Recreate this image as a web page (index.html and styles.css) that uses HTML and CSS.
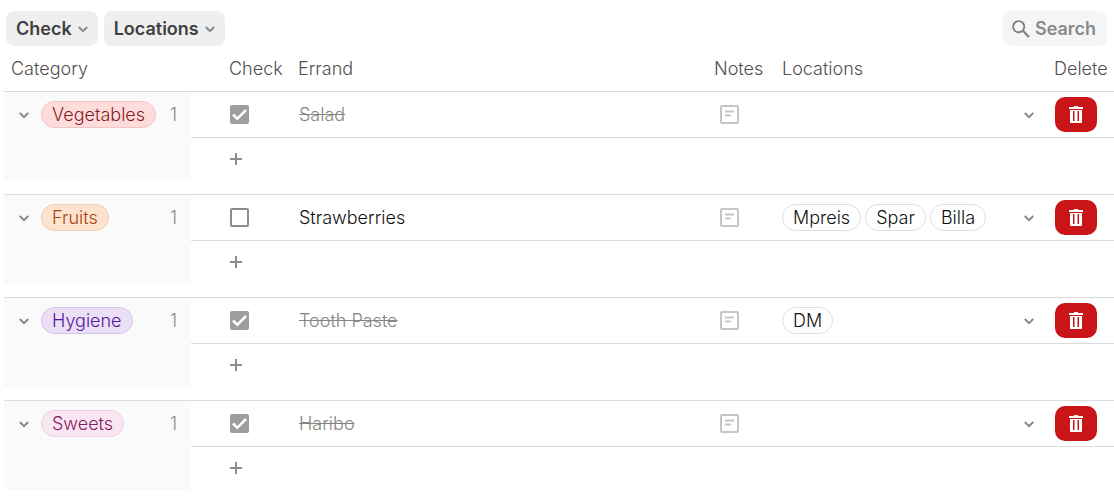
FILE: index.html
```html
<!DOCTYPE html>
<html lang="en">
<head>
  <meta charset="UTF-8" />
  <meta name="viewport" content="width=device-width, initial-scale=1.0"/>
  <title>Errands</title>
  <link rel="stylesheet" href="styles.css">
</head>
<body>

  <!-- Icons -->
  <svg class="sprite" aria-hidden="true">
    <symbol id="chevron" viewBox="0 0 10 10">
      <path d="M.8 3l4.2 4.2L9.2 3" fill="none" stroke="currentColor" stroke-width="2"/>
    </symbol>
    <symbol id="search" viewBox="0 0 18 18">
      <circle cx="6.7" cy="6.7" r="5.6" fill="none" stroke="currentColor" stroke-width="1.9"/>
      <path d="M10.8 10.8l6.2 6.2" fill="none" stroke="currentColor" stroke-width="2.3"/>
    </symbol>
    <symbol id="note" viewBox="0 0 19 19">
      <rect x="1" y="1" width="17" height="17" rx="1" fill="none" stroke="currentColor" stroke-width="2"/>
      <path d="M5 6.5h9M5 10.5h6" fill="none" stroke="currentColor" stroke-width="2"/>
    </symbol>
    <symbol id="plus" viewBox="0 0 12 12">
      <path d="M6 0v12M0 6h12" fill="none" stroke="currentColor" stroke-width="2"/>
    </symbol>
    <symbol id="trash" viewBox="0 0 14 17">
      <path d="M0 1h4.5l.8-1h3.4l.8 1H14v2H0z" fill="currentColor"/>
      <path fill-rule="evenodd" d="M1 4h12v12a1 1 0 0 1-1 1H2a1 1 0 0 1-1-1zM4 5v10h1.5V5zM8.5 5v10H10V5z" fill="currentColor"/>
    </symbol>
  </svg>

  <header class="toolbar">
    <button class="filter" type="button">Check <svg class="chevron"><use href="#chevron"/></svg></button>
    <button class="filter" type="button">Locations <svg class="chevron"><use href="#chevron"/></svg></button>
    <label class="search">
      <svg class="search-icon"><use href="#search"/></svg>
      <input type="text" placeholder="Search" aria-label="Search">
    </label>
  </header>

  <table class="errands">
    <colgroup>
      <col class="col-category">
      <col class="col-check">
      <col>
      <col class="col-notes">
      <col class="col-locations">
      <col class="col-delete">
    </colgroup>
    <thead>
      <tr>
        <th>Category</th>
        <th class="check">Check</th>
        <th>Errand</th>
        <th>Notes</th>
        <th>Locations</th>
        <th>Delete</th>
      </tr>
    </thead>

    <tbody>
      <tr class="item">
        <th class="category" rowspan="2" scope="rowgroup">
          <div class="group">
            <button class="icon-btn" type="button" aria-label="Collapse Vegetables"><svg class="chevron"><use href="#chevron"/></svg></button>
            <span class="tag vegetables">Vegetables</span>
            <span class="count">1</span>
          </div>
        </th>
        <td class="check"><input type="checkbox" aria-label="Salad" checked></td>
        <td class="done">Salad</td>
        <td class="notes"><button class="icon-btn" type="button" aria-label="Notes"><svg class="note"><use href="#note"/></svg></button></td>
        <td class="places">
          <div class="locations">
            <button class="icon-btn open" type="button" aria-label="Choose locations"><svg class="chevron"><use href="#chevron"/></svg></button>
          </div>
        </td>
        <td><button class="delete" type="button" aria-label="Delete Salad"><svg class="trash"><use href="#trash"/></svg></button></td>
      </tr>
      <tr class="add">
        <td class="check" colspan="5"><button class="icon-btn" type="button" aria-label="Add errand"><svg class="plus"><use href="#plus"/></svg></button></td>
      </tr>
    </tbody>

    <tbody>
      <tr class="item">
        <th class="category" rowspan="2" scope="rowgroup">
          <div class="group">
            <button class="icon-btn" type="button" aria-label="Collapse Fruits"><svg class="chevron"><use href="#chevron"/></svg></button>
            <span class="tag fruits">Fruits</span>
            <span class="count">1</span>
          </div>
        </th>
        <td class="check"><input type="checkbox" aria-label="Strawberries"></td>
        <td>Strawberries</td>
        <td class="notes"><button class="icon-btn" type="button" aria-label="Notes"><svg class="note"><use href="#note"/></svg></button></td>
        <td class="places">
          <div class="locations">
            <span class="tag">Mpreis</span>
            <span class="tag">Spar</span>
            <span class="tag">Billa</span>
            <button class="icon-btn open" type="button" aria-label="Choose locations"><svg class="chevron"><use href="#chevron"/></svg></button>
          </div>
        </td>
        <td><button class="delete" type="button" aria-label="Delete Strawberries"><svg class="trash"><use href="#trash"/></svg></button></td>
      </tr>
      <tr class="add">
        <td class="check" colspan="5"><button class="icon-btn" type="button" aria-label="Add errand"><svg class="plus"><use href="#plus"/></svg></button></td>
      </tr>
    </tbody>

    <tbody>
      <tr class="item">
        <th class="category" rowspan="2" scope="rowgroup">
          <div class="group">
            <button class="icon-btn" type="button" aria-label="Collapse Hygiene"><svg class="chevron"><use href="#chevron"/></svg></button>
            <span class="tag hygiene">Hygiene</span>
            <span class="count">1</span>
          </div>
        </th>
        <td class="check"><input type="checkbox" aria-label="Tooth Paste" checked></td>
        <td class="done">Tooth Paste</td>
        <td class="notes"><button class="icon-btn" type="button" aria-label="Notes"><svg class="note"><use href="#note"/></svg></button></td>
        <td class="places">
          <div class="locations">
            <span class="tag">DM</span>
            <button class="icon-btn open" type="button" aria-label="Choose locations"><svg class="chevron"><use href="#chevron"/></svg></button>
          </div>
        </td>
        <td><button class="delete" type="button" aria-label="Delete Tooth Paste"><svg class="trash"><use href="#trash"/></svg></button></td>
      </tr>
      <tr class="add">
        <td class="check" colspan="5"><button class="icon-btn" type="button" aria-label="Add errand"><svg class="plus"><use href="#plus"/></svg></button></td>
      </tr>
    </tbody>

    <tbody>
      <tr class="item">
        <th class="category" rowspan="2" scope="rowgroup">
          <div class="group">
            <button class="icon-btn" type="button" aria-label="Collapse Sweets"><svg class="chevron"><use href="#chevron"/></svg></button>
            <span class="tag sweets">Sweets</span>
            <span class="count">1</span>
          </div>
        </th>
        <td class="check"><input type="checkbox" aria-label="Haribo" checked></td>
        <td class="done">Haribo</td>
        <td class="notes"><button class="icon-btn" type="button" aria-label="Notes"><svg class="note"><use href="#note"/></svg></button></td>
        <td class="places">
          <div class="locations">
            <button class="icon-btn open" type="button" aria-label="Choose locations"><svg class="chevron"><use href="#chevron"/></svg></button>
          </div>
        </td>
        <td><button class="delete" type="button" aria-label="Delete Haribo"><svg class="trash"><use href="#trash"/></svg></button></td>
      </tr>
      <tr class="add">
        <td class="check" colspan="5"><button class="icon-btn" type="button" aria-label="Add errand"><svg class="plus"><use href="#plus"/></svg></button></td>
      </tr>
    </tbody>
  </table>

</body>
</html>
```
FILE: styles.css
```css
* {
  box-sizing: border-box;
}

body {
  margin: 0;
  padding: 11px 0 0 4px;
  font-family: Inter, sans-serif;
  font-size: 18px;
  font-weight: 300;
  line-height: 25px;
  color: #111;
  background: #fff;
}

button, input {
  font: inherit;
  margin: 0;
}

button {
  border: none;
  cursor: pointer;
}

svg {
  display: block;
  flex: none;
}

.sprite {
  display: none;
}

.chevron {
  width: 10px;
  height: 10px;
  color: #888;
}

/* Toolbar */
.toolbar {
  display: flex;
  gap: 6px;
  padding: 0 7px 0 2px;
}

.filter, .search {
  display: flex;
  align-items: center;
  height: 35px;
  border-radius: 8px;
  font-weight: 600;
}

.filter {
  gap: 6px;
  padding: 0 10px;
  background: #efefef;
  color: #404040;
}

.search {
  gap: 5px;
  margin-left: auto;
  padding: 0 9px;
  background: #f5f5f5;
  color: #808080;
}

.search-icon {
  width: 18px;
  height: 18px;
}

.search input {
  width: 63px;
  padding: 0;
  border: none;
  outline: none;
  background: none;
  color: #404040;
}

.search input::placeholder {
  color: #8a8a8a;
  opacity: 1;
}

/* Table */
.errands {
  width: 100%;
  table-layout: fixed;
  border-collapse: separate;
  border-spacing: 0;
}

.col-category { width: 187px; }
.col-check { width: 97px; }
.col-notes { width: 68px; }
.col-locations { width: 272px; }
.col-delete { width: 70px; }

th, td {
  padding: 0 10px;
  text-align: left;
  font-weight: 300;
  white-space: nowrap;
}

td {
  padding-left: 11px;
}

thead th {
  height: 45px;
  color: #505050;
}

thead th:first-child {
  padding-left: 7px;
}

thead th:last-child {
  padding-right: 0;
}

thead .check {
  padding: 0 0 0 38px;
}

td.check {
  padding: 0 0 0 39px;
}

.item th, .item td {
  height: 46px;
  border-top: 1px solid #dcdcdc;
}

.add td {
  height: 44px;
  padding-bottom: 2px;
  border-top: 1px solid #dcdcdc;
}

/* space below each group */
tbody::after {
  content: "";
  display: block;
  height: 13px;
}

.item .category {
  padding: 9px 14px 0 15px;
  vertical-align: top;
  background: #fafafa;
}

.group, .locations {
  display: flex;
  align-items: center;
}

.group .tag {
  margin-left: 12px;
}

.count {
  margin-left: auto;
  color: #8c8c8c;
}

.places {
  padding-left: 10px;
}

.locations {
  gap: 4px;
}

.open {
  margin-left: auto;
}

.tag {
  height: 27px;
  padding: 0 10px;
  border: 1px solid #dedede;
  border-radius: 14px;
}

.vegetables { background: #ffdcdc; border-color: #f2c4c4; color: #851d26; }
.fruits { background: #fde3cd; border-color: #f0cdb0; color: #a84512; }
.hygiene { background: #ebdff7; border-color: #d6c3e8; color: #56159c; }
.sweets { background: #fae6f3; border-color: #ecd0e2; color: #851a60; }

.done {
  color: #858585;
  text-decoration: line-through;
}

.icon-btn {
  display: block;
  padding: 0;
  background: none;
  color: #8c8c8c;
}

.notes {
  padding-left: 16px;
}

.note {
  width: 19px;
  height: 19px;
  color: #c6c6c6;
}

.plus {
  width: 12px;
  height: 12px;
}

input[type="checkbox"] {
  display: block;
  width: 19px;
  height: 19px;
  appearance: none;
  border: 2px solid #8c8c8c;
  border-radius: 2px;
  background: #fff;
}

input[type="checkbox"]:checked {
  border: none;
  background: #9e9e9e url("data:image/svg+xml,%3Csvg xmlns='http://www.w3.org/2000/svg' viewBox='0 0 19 19'%3E%3Cpath d='M3 9.5l4.3 4.3L16 5' fill='none' stroke='white' stroke-width='2.5'/%3E%3C/svg%3E");
}

.delete {
  display: flex;
  align-items: center;
  justify-content: center;
  width: 42px;
  height: 35px;
  padding: 0;
  border-radius: 10px;
  background: #c91517;
  color: #fff;
}

.trash {
  width: 14px;
  height: 17px;
}
```
